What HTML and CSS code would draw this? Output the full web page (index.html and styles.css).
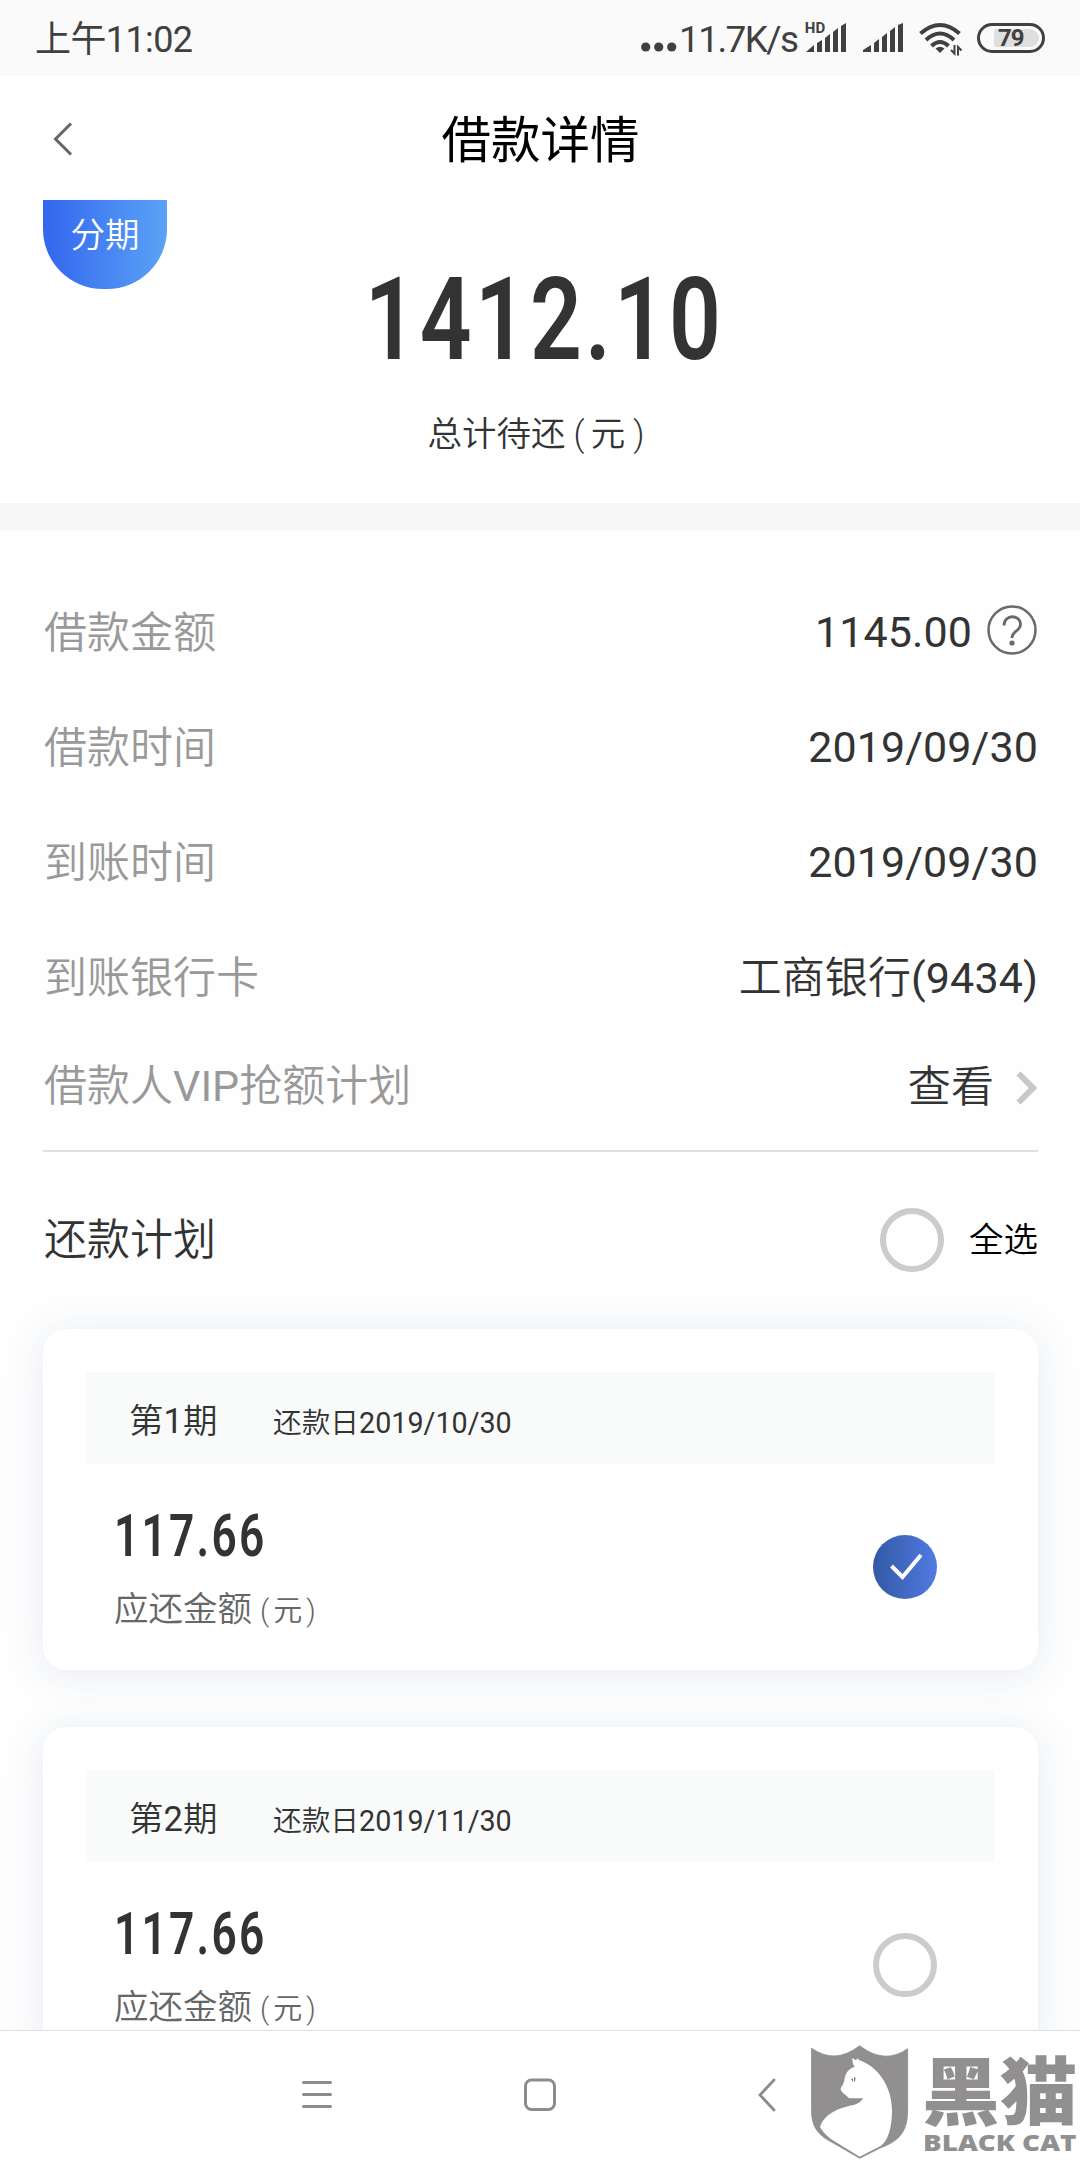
FILE: index.html
```html
<!DOCTYPE html>
<html lang="zh-CN">
<head>
	<title>借款详情</title>
	<meta charset="UTF-8">
	<link rel="stylesheet" href="styles.css">
</head>
<body>
<div class="page">
	<!-- 状态栏 -->
	<div class="status">
		<span class="time">上午<b>11:02</b></span>
		<div class="status_right">
			<svg class="dots" width="36" height="10" viewBox="0 0 36 10" fill="#404040">
				<circle cx="4.7" cy="5" r="4.6"/><circle cx="17.7" cy="5" r="4.6"/><circle cx="30.7" cy="5" r="4.6"/>
			</svg>
			<span class="speed">11.7K/s</span>
			<svg class="signal_hd" width="43" height="35" viewBox="-2 -4 43 35" fill="#404040">
				<text x="-1.2" y="11" class="hd">HD</text>
				<path d="M0 30L8 23V30zM11 21L16 18V30H11zM19 16L24 12V30H19zM27 10L32 6V30H27zM35 4L40 1V30H35z"/>
			</svg>
			<svg class="signal" width="41" height="31" viewBox="0 0 41 31" fill="#404040">
				<path d="M0 30V28L8 23V30zM11 21L16 17V30H11zM19 15L24 11V30H19zM27 9L32 5V30H27zM35 3L40 1V30H35z"/>
			</svg>
			<svg class="wifi" width="44" height="34" viewBox="0 0 44 34" fill="none" stroke="#404040" stroke-width="4">
				<path d="M1.500 11.500Q21 -5.500 40.500 11.500M7 18Q21 5 35 18M12.500 24Q21 16 29.500 24"/>
				<path d="M16.500 26.500Q21 23 25.500 26.500L21 31z" fill="#404040" stroke="none"/>
				<path d="M35.500 23V31.500L32 28M39 33.500V25L42.500 28.500" stroke-width="2"/>
			</svg>
			<div class="battery"><span class="level">79</span></div>
		</div>
	</div>
	<!-- 标题 -->
	<div class="header">
		<svg class="back" width="20" height="34" viewBox="0 0 20 34" fill="none" stroke="#666" stroke-width="3">
			<path d="M18 1.500L2.500 17L18 32.500"/>
		</svg>
		<span class="title">借款详情</span>
	</div>
	<div class="total">
		<div class="tag">分期</div>
		<div class="total_box">
			<div class="total_num"><span>1412.10</span></div>
			<div class="total_text">总计待还<span class="paren">(</span>元<span class="paren">)</span></div>
		</div>
	</div>
	<div class="gap"></div>
	<!-- 借款信息 -->
	<div class="info">
		<div class="row">
			<span class="name">借款金额</span>
			<span class="value">1145.00</span>
			<svg class="help" width="50" height="50" viewBox="0 0 50 50" fill="none" stroke="#6a6a6a">
				<circle cx="25" cy="25" r="23.500" stroke-width="2.500"/>
				<path d="M17 20.500C17 9 33.500 9 33.500 19.500C33.500 26 25 26 25 33" stroke-width="2.800"/>
				<circle cx="25" cy="38" r="2.600" fill="#6a6a6a" stroke="none"/>
			</svg>
		</div>
		<div class="row">
			<span class="name">借款时间</span>
			<span class="value">2019/09/30</span>
		</div>
		<div class="row">
			<span class="name">到账时间</span>
			<span class="value">2019/09/30</span>
		</div>
		<div class="row">
			<span class="name">到账银行卡</span>
			<span class="value value_cn">工商银行<b>(9434)</b></span>
		</div>
		<div class="row row_vip">
			<span class="name">借款人<b>VIP</b>抢额计划</span>
			<span class="value value_cn">查看</span>
			<svg class="arrow" width="22" height="34" viewBox="0 0 22 34" fill="none" stroke="#c7c7cc" stroke-width="6">
				<path d="M2.500 2.500L17 17L2.500 31.500"/>
			</svg>
		</div>
	</div>
	<!-- 还款计划 -->
	<div class="plan">
		<span class="plan_name">还款计划</span>
		<span class="circle"></span>
		<span class="all">全选</span>
	</div>
	<div class="list">
		<div class="card">
			<div class="card_top">
				<span class="period">第<b>1</b>期</span>
				<span class="date">还款日<b>2019/10/30</b></span>
			</div>
			<div class="card_body">
				<div class="card_left">
					<div class="money"><span>117.66</span></div>
					<div class="money_text">应还金额<span class="unit">(元)</span></div>
				</div>
				<span class="circle checked">
					<svg width="64" height="64" viewBox="0 0 64 64" fill="none" stroke="#fff" stroke-width="4">
						<path d="M18.500 31L29.500 42L48 20"/>
					</svg>
				</span>
			</div>
		</div>
		<div class="card">
			<div class="card_top">
				<span class="period">第<b>2</b>期</span>
				<span class="date">还款日<b>2019/11/30</b></span>
			</div>
			<div class="card_body">
				<div class="card_left">
					<div class="money"><span>117.66</span></div>
					<div class="money_text">应还金额<span class="unit">(元)</span></div>
				</div>
				<span class="circle"></span>
			</div>
		</div>
	</div>
	<!-- 底部导航 -->
	<div class="nav">
		<svg class="nav_menu" width="30" height="34" viewBox="0 0 30 34" stroke="#8c8c8c" stroke-width="3" stroke-linecap="round">
			<path d="M1.500 4.500H28.500M1.500 16.500H28.500M1.500 28.500H28.500"/>
		</svg>
		<svg class="nav_home" width="32" height="34" viewBox="0 0 32 34" fill="none" stroke="#8c8c8c" stroke-width="3">
			<rect x="1.500" y="2" width="29" height="29.500" rx="6"/>
		</svg>
		<svg class="nav_back" width="18" height="34" viewBox="0 0 18 34" fill="none" stroke="#8c8c8c" stroke-width="2.800" stroke-linecap="round">
			<path d="M16 2L2 17L16 32"/>
		</svg>
	</div>
	<!-- 水印 -->
	<div class="logo">
		<svg class="shield" width="98" height="115" viewBox="94 75 294 345">
			<path fill="#918f90" stroke="#858384" stroke-width="2" d="M95 84Q165 135 240 77Q315 135 384 86V270C384 345 350 365 300 385L240 415L175 377C125 350 95 335 95 265z"/>
			<path fill="#fff" d="M218 114L229 121L233 115L238 120C295 140 337 200 337 270C337 325 325 362 303 378L240 410L168 366C145 352 128 335 121 320C132 290 160 270 205 259C230 254 244 248 250 235H208C202 226 182 218 183 204Q190 196 194 182C196 160 206 146 225 140C219 132 218 124 218 114z"/>
			<path fill="#858384" d="M214 178L220 175V187zM223 170L228 175L226 184L223 187z"/>
		</svg>
		<div class="logo_text">
			<div class="logo_cn"><span>黑猫</span></div>
			<div class="logo_en"><span>BLACK CAT</span></div>
		</div>
	</div>
</div>
</body>
</html>
```
FILE: styles.css
```css
*{
	margin: 0px;
	padding: 0px;
	box-sizing: border-box;
}
body{
	font-family: Roboto, "Noto Sans CJK SC", sans-serif;
	font-weight: 350;
	color: #333;
	background-color: #fff;
}
b{
	font-weight: 400;
}
svg{
	display: block;
	flex: none;
}
.page{
	position: relative;
	width: 1080px;
	height: 2160px;
	overflow: hidden;
	display: flex;
	flex-direction: column;
	background-color: #fefefe;
}
/* 状态栏 */
.status{
	flex: none;
	height: 76px;
	padding: 0 35px;
	display: flex;
	justify-content: space-between;
	background-color: #fafafa;
	color: #404040;
}
.time{
	font-size: 36px;
	font-weight: 400;
	line-height: 80px;
	letter-spacing: -0.6px;
}
.status_right{
	display: flex;
	align-items: flex-start;
}
.dots{
	margin-top: 42px;
}
.speed{
	width: 127px;
	padding-left: 2px;
	font-size: 37px;
	font-weight: 400;
	line-height: 80px;
	letter-spacing: -1.600px;
	white-space: nowrap;
}
.signal_hd{
	margin-top: 18px;
	margin-right: 16px;
}
.hd{
	font-size: 15px;
	font-weight: bold;
}
.signal{
	margin-top: 22px;
	margin-right: 15px;
}
.wifi{
	margin-top: 22px;
	margin-right: 14px;
}
.battery{
	width: 68px;
	height: 30px;
	margin-top: 23px;
	padding: 3px;
	border: 3px solid #404040;
	border-radius: 15px;
}
.level{
	display: block;
	height: 18px;
	margin-left: 11px;
	border-radius: 2px 9px 9px 2px;
	background-color: #dfdfdf;
	font-size: 24px;
	font-weight: bold;
	line-height: 18px;
	text-indent: 4px;
	letter-spacing: -1px;
}
/* 标题 */
.header{
	flex: none;
	height: 124px;
	padding: 4px 52px 0 53px;
	display: grid;
	grid-template-columns: 20px 1fr 20px;
	align-items: center;
	background-color: #fff;
}
.back{
	margin-bottom: 3px;
}
.title{
	padding-top: 2px;
	text-align: center;
	font-size: 49.500px;
	font-weight: 400;
	line-height: 60px;
	color: #000;
}
.total{
	flex: none;
	height: 303px;
	padding: 0 43px;
	display: grid;
	grid-template-columns: 124px 1fr 124px;
	align-items: start;
	background-color: #fff;
}
.tag{
	height: 89px;
	border-radius: 0 0 60px 60px;
	background: linear-gradient(to right, #3366ee, #5aa3f6);
	color: #fff;
	font-size: 34.500px;
	line-height: 71px;
	text-align: center;
}
.total_box{
	padding-top: 70px;
	text-align: center;
}
.total_num{
	height: 100px;
	padding-left: 9px;
	line-height: 100px;
	font-size: 115px;
	font-weight: 600;
}
.total_num span{
	display: inline-block;
	letter-spacing: 4px;
	transform: scaleX(0.790);
}
.total_text{
	padding-top: 39px;
	padding-right: 2px;
	font-size: 34.500px;
	line-height: 50px;
}
.paren{
	padding: 0 6px 0 8px;
}
.gap{
	flex: none;
	height: 28px;
	background-color: #f7f7f7;
}
/* 借款信息 */
.info{
	flex: none;
	margin: 0 42px 0 43px;
	padding-top: 43px;
	border-bottom: 2px solid #e0e0e0;
}
.row{
	height: 115px;
	display: flex;
	align-items: center;
	font-size: 43px;
}
.name{
	flex: 1;
	padding-bottom: 6px;
	padding-left: 1px;
	color: #999;
}
.value{
	font-weight: 400;
	letter-spacing: 0.1px;
}
.value_cn{
	padding-bottom: 5px;
	font-weight: 350;
}
.help{
	margin-left: 15px;
	margin-right: 1px;
	margin-bottom: 4px;
}
.row_vip{
	height: 116px;
	padding-bottom: 14px;
}
.arrow{
	margin-top: 5px;
	margin-left: 22px;
}
/* 还款计划 */
.plan{
	flex: none;
	height: 177px;
	padding: 0 42px 2px 43px;
	display: flex;
	align-items: center;
}
.plan_name{
	flex: 1;
	padding-left: 1px;
	padding-bottom: 7px;
	font-size: 43px;
}
.circle{
	flex: none;
	width: 64px;
	height: 64px;
	border: 6px solid #ccc;
	border-radius: 50%;
}
.checked{
	border: none;
	background: linear-gradient(to right, #3159a4, #527ae2);
}
.all{
	margin-left: 25px;
	padding-bottom: 6px;
	color: #000;
	font-size: 34.500px;
}
.list{
	flex: 1;
	min-height: 0;
	padding: 0 42px 0 43px;
}
.card{
	height: 341px;
	margin-bottom: 57px;
	padding: 43px;
	border-radius: 24px;
	background-color: #fff;
	box-shadow: 0 4px 42px rgba(40, 70, 150, 0.11);
}
.card_top{
	height: 92px;
	padding-left: 43px;
	display: flex;
	align-items: center;
	background-color: #f9fbfa;
}
.period{
	width: 144px;
	font-size: 34.500px;
}
.date{
	padding-top: 4px;
	font-size: 28.700px;
}
.card_body{
	padding: 39px 58px 0 28px;
	display: flex;
	justify-content: space-between;
}
.money{
	height: 64px;
	font-size: 59px;
	font-weight: 600;
	line-height: 65px;
}
.money span{
	display: inline-block;
	letter-spacing: 3px;
	transform: scaleX(0.750);
	transform-origin: left;
}
.money_text{
	color: #666;
	font-size: 34.500px;
	line-height: 84px;
}
.unit{
	margin-left: 8px;
	font-size: 29px;
	letter-spacing: 4px;
}
.card_body .circle{
	margin-top: 32px;
}
/* 底部导航 */
.nav{
	flex: none;
	height: 130px;
	padding: 47px 304px 0 302px;
	display: flex;
	border-top: 1px solid #dedede;
	background-color: #fff;
}
.nav_home{
	margin-left: 192px;
}
.nav_back{
	margin-left: 202px;
}
/* 水印 */
.logo{
	position: absolute;
	left: 811px;
	top: 2045px;
	display: flex;
	color: #918f90;
}
.logo_text{
	width: 155px;
	margin-left: 13px;
	white-space: nowrap;
}
.logo_text span{
	display: inline-block;
	transform-origin: left;
}
.logo_cn{
	height: 82px;
	font-family: "Noto Sans CJK SC", sans-serif;
	font-size: 74px;
	font-weight: 900;
	line-height: 84px;
}
.logo_cn span{
	transform: scaleX(1.050);
}
.logo_en{
	padding-left: 1px;
	font-family: "Open Sans", sans-serif;
	font-size: 22.500px;
	font-weight: 800;
	line-height: 32px;
}
.logo_en span{
	transform: scaleX(1.230);
}
```
